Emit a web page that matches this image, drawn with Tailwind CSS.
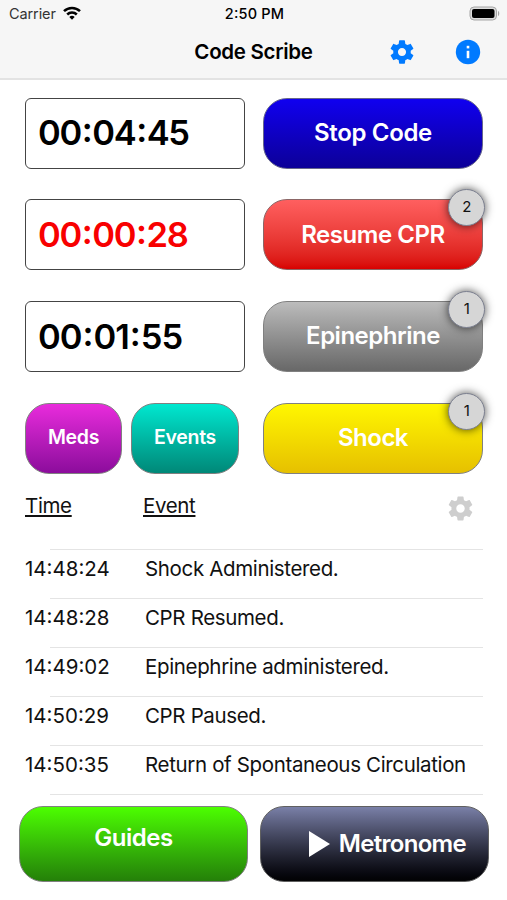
<!DOCTYPE html>
<html lang="en">
<head>
    <meta charset="UTF-8">
    <meta name="viewport" content="width=device-width, initial-scale=1.0">
    <title>Code Scribe</title>
    <script src="https://cdn.jsdelivr.net/npm/@tailwindcss/browser@4"></script>
</head>
<body class="bg-white text-black font-['Inter',sans-serif] w-[507px] h-[900px] overflow-hidden">
    <!-- Header -->
    <header class="h-20 bg-[#f6f6f6] border-b-2 border-[#e3e3e3]">
        <div class="grid grid-cols-3 items-center h-[27px] pl-[9px] pr-[7px] text-[14.5px] leading-none">
            <div class="flex items-center gap-[7px] pt-px text-[#333]">
                <span class="tracking-[-0.1px]">Carrier</span>
                <svg class="w-[18px] h-[14px] mb-[2px]" viewBox="0 0 18 14" fill="none" stroke="#000" stroke-width="2.5">
                    <path d="M1 5.2a11.3 11.3 0 0 1 16 0" />
                    <path d="M4.2 8.5a6.8 6.8 0 0 1 9.6 0" />
                    <path d="M9 13.8L6.3 11.1a3.8 3.8 0 0 1 5.4 0z" fill="#000" stroke="none" />
                </svg>
            </div>
            <span class="pt-px text-center font-medium tracking-[0.2px]">2<span class="relative -top-px">:</span>50 PM</span>
            <div class="flex justify-end">
                <svg class="w-[31px] h-[15px]" viewBox="0 0 31 15">
                    <rect x="1" y="1" width="26.5" height="13" rx="4" fill="#ddd" stroke="#a5a5a5" stroke-width="1" />
                    <rect x="3" y="3" width="22.5" height="9" rx="2" fill="#000" />
                    <path d="M29 5c1.7 .6 1.7 4.4 0 5z" fill="#a5a5a5" />
                </svg>
            </div>
        </div>
        <div class="grid grid-cols-[1fr_auto_1fr] items-center h-[50px]">
            <span></span>
            <h1 class="pt-px text-[20.5px] font-semibold tracking-[-0.3px]">Code Scribe</h1>
            <div class="flex items-center justify-end gap-[38px] pr-[25px]">
                <svg class="size-7" viewBox="0 0 24 24" fill="#007aff">
                    <path d="M19.43 12.98c.04-.32.07-.64.07-.98s-.03-.66-.07-.98l2.11-1.65c.19-.15.24-.42.12-.64l-2-3.46c-.12-.22-.39-.3-.61-.22l-2.49 1c-.52-.4-1.08-.73-1.69-.98l-.38-2.65C14.46 2.18 14.25 2 14 2h-4c-.25 0-.46.18-.49.42l-.38 2.65c-.61.25-1.17.59-1.69.98l-2.49-1c-.23-.09-.49 0-.61.22l-2 3.46c-.13.22-.07.49.12.64l2.11 1.65c-.04.32-.07.65-.07.98s.03.66.07.98l-2.11 1.65c-.19.15-.24.42-.12.64l2 3.46c.12.22.39.3.61.22l2.49-1c.52.4 1.08.73 1.69.98l.38 2.65c.03.24.24.42.49.42h4c.25 0 .46-.18.49-.42l.38-2.65c.61-.25 1.17-.59 1.69-.98l2.49 1c.23.09.49 0 .61-.22l2-3.46c.12-.22.07-.49-.12-.64l-2.11-1.65zM12 15.5c-1.93 0-3.5-1.57-3.5-3.5s1.57-3.5 3.5-3.5 3.5 1.57 3.5 3.5-1.57 3.5-3.5 3.5z" />
                </svg>
                <svg class="size-7" viewBox="0 0 28 28">
                    <circle cx="14" cy="14" r="12.2" fill="#007aff" />
                    <rect x="12.7" y="7.8" width="2.6" height="2.6" fill="#fff" />
                    <rect x="12.7" y="12.8" width="2.6" height="7.4" fill="#fff" />
                </svg>
            </div>
        </div>
    </header>

    <!-- Timers and actions -->
    <main class="pt-[17.5px] pr-6 pl-[25px]">
        <div class="grid grid-cols-[220px_220px] gap-x-[18px] gap-y-[30.7px]">
            <div class="h-[71px] flex items-center border-[1.5px] border-[#444] rounded-md pl-3 text-[34.5px] font-semibold tracking-[-1.3px]">
                <span>00<span class="relative -top-[3px] mx-[0.8px]">:</span>04<span class="relative -top-[3px] mx-[0.8px]">:</span>45</span>
            </div>
            <button class="h-[71px] rounded-[24px] border border-[#66668c] bg-linear-to-b from-[#1000f0] to-[#0c0098] text-white text-[24px] font-semibold tracking-[-0.35px]">Stop Code</button>

            <div class="h-[71px] flex items-center border-[1.5px] border-[#444] rounded-md pl-3 text-[34.5px] font-semibold tracking-[-1.3px] text-[#f80000]">
                <span>00<span class="relative -top-[3px] mx-[0.8px]">:</span>00<span class="relative -top-[3px] mx-[0.8px]">:</span>28</span>
            </div>
            <button class="relative h-[71px] rounded-[24px] border border-[#8c6666] bg-linear-to-b from-[#ff5f5f] to-[#d80000] text-white text-[24px] font-semibold tracking-[-0.45px]">
                Resume CPR
                <span class="absolute -top-[11px] -right-[3px] size-[37px] rounded-full border border-[#7c8090] bg-[#d6d6d6] text-[#111] text-[15px] font-normal flex items-center justify-center shadow-[0_0_10px_rgba(0,0,0,0.7)]">2</span>
            </button>

            <div class="h-[71px] flex items-center border-[1.5px] border-[#444] rounded-md pl-3 text-[34.5px] font-semibold tracking-[-0.9px]">
                <span>00<span class="relative -top-[3px] mx-[0.8px]">:</span>01<span class="relative -top-[3px] mx-[0.8px]">:</span>55</span>
            </div>
            <button class="relative h-[71px] rounded-[24px] border border-[#808080] bg-linear-to-b from-[#bcbcbc] to-[#686868] text-white text-[24px] font-semibold tracking-[-0.5px]">
                Epinephrine
                <span class="absolute -top-[11px] -right-[3px] size-[37px] rounded-full border border-[#7c8090] bg-[#d6d6d6] text-[#111] text-[15px] font-normal flex items-center justify-center shadow-[0_0_10px_rgba(0,0,0,0.7)]">1</span>
            </button>

            <div class="flex gap-[9px]">
                <button class="h-[71px] w-[97px] rounded-[24px] border border-[#808080] bg-linear-to-b from-[#e92bdc] to-[#8c0c9c] text-white text-[19.5px] font-semibold tracking-[-0.3px]">Meds</button>
                <button class="h-[71px] w-[108px] rounded-[24px] border border-[#808080] bg-linear-to-b from-[#00e8d0] to-[#008878] text-white text-[19.5px] font-semibold tracking-[-0.3px]">Events</button>
            </div>
            <button class="relative h-[71px] rounded-[24px] border border-[#808080] bg-linear-to-b from-[#fff700] to-[#e6c000] text-white text-[24px] font-semibold tracking-[-0.5px]">
                Shock
                <span class="absolute -top-[11px] -right-[3px] size-[37px] rounded-full border border-[#7c8090] bg-[#d6d6d6] text-[#111] text-[15px] font-normal flex items-center justify-center shadow-[0_0_10px_rgba(0,0,0,0.7)]">1</span>
            </button>
        </div>

        <!-- Event log -->
        <div class="flex items-center h-[75.4px] pb-[9px] text-[20.5px] text-[#111] tracking-[-0.35px]">
            <span class="w-[118px] underline underline-offset-2 decoration-[1.5px]">Time</span>
            <span class="underline underline-offset-2 decoration-[1.5px]">Event</span>
            <svg class="size-[29px] ml-auto mr-[8px] mt-[3px]" viewBox="0 0 24 24" fill="#cecece">
                <path d="M19.43 12.98c.04-.32.07-.64.07-.98s-.03-.66-.07-.98l2.11-1.65c.19-.15.24-.42.12-.64l-2-3.46c-.12-.22-.39-.3-.61-.22l-2.49 1c-.52-.4-1.08-.73-1.69-.98l-.38-2.65C14.46 2.18 14.25 2 14 2h-4c-.25 0-.46.18-.49.42l-.38 2.65c-.61.25-1.17.59-1.69.98l-2.49-1c-.23-.09-.49 0-.61.22l-2 3.46c-.13.22-.07.49.12.64l2.11 1.65c-.04.32-.07.65-.07.98s.03.66.07.98l-2.11 1.65c-.19.15-.24.42-.12.64l2 3.46c.12.22.39.3.61.22l2.49-1c.52.4 1.08.73 1.69.98l.38 2.65c.03.24.24.42.49.42h4c.25 0 .46-.18.49-.42l.38-2.65c.61-.25 1.17-.59 1.69-.98l2.49 1c.23.09.49 0 .61-.22l2-3.46c.12-.22.07-.49-.12-.64l-2.11-1.65zM12 15.5c-1.93 0-3.5-1.57-3.5-3.5s1.57-3.5 3.5-3.5 3.5 1.57 3.5 3.5-1.57 3.5-3.5 3.5z" />
            </svg>
        </div>
        <div class="text-[20.5px] text-[#111] tracking-[-0.35px] whitespace-nowrap">
            <div class="ml-[25px] h-px bg-[#e4e4e4]"></div>
            <div class="flex items-center h-12 pb-[9px]"><span class="w-[120px] tracking-normal">14:48:24</span><span>Shock Administered.</span></div>
            <div class="ml-[25px] h-px bg-[#e4e4e4]"></div>
            <div class="flex items-center h-12 pb-[9px]"><span class="w-[120px] tracking-normal">14:48:28</span><span>CPR Resumed.</span></div>
            <div class="ml-[25px] h-px bg-[#e4e4e4]"></div>
            <div class="flex items-center h-12 pb-[9px]"><span class="w-[120px] tracking-normal">14:49:02</span><span>Epinephrine administered.</span></div>
            <div class="ml-[25px] h-px bg-[#e4e4e4]"></div>
            <div class="flex items-center h-12 pb-[9px]"><span class="w-[120px] tracking-normal">14:50:29</span><span>CPR Paused.</span></div>
            <div class="ml-[25px] h-px bg-[#e4e4e4]"></div>
            <div class="flex items-center h-12 pb-[9px]"><span class="w-[120px] tracking-normal">14:50:35</span><span>Return of Spontaneous Circulation</span></div>
            <div class="ml-[25px] h-px bg-[#e4e4e4]"></div>
        </div>
    </main>

    <!-- Bottom buttons -->
    <footer class="flex gap-3 pl-[19px] pt-[11px]">
        <button class="h-[76px] w-[229px] pb-[11px] rounded-[24px] border border-[#808080] bg-linear-to-b from-[#4cff00] to-[#248008] text-white text-[24px] font-semibold tracking-[-0.5px]">Guides</button>
        <button class="h-[76px] w-[229px] flex items-center justify-end gap-[9px] pr-[22px] rounded-[24px] border border-[#606060] bg-linear-to-b from-[#7a80a8] to-[#020204] text-white text-[24px] font-semibold tracking-[-0.7px]">
            <svg class="w-[21px] h-[26px]" viewBox="0 0 21 26" fill="#fff"><path d="M0 0l21 13L0 26z" /></svg>
            <span>Metronome</span>
        </button>
    </footer>
</body>
</html>
